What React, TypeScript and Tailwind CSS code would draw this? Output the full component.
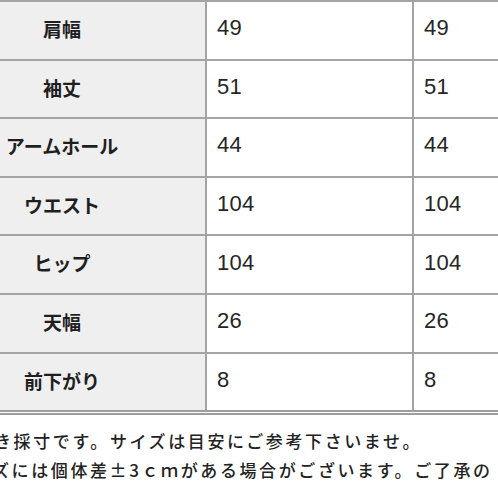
const rows = [
  { label: "肩幅", a: "49", b: "49" },
  { label: "袖丈", a: "51", b: "51" },
  { label: "アームホール", a: "44", b: "44" },
  { label: "ウエスト", a: "104", b: "104" },
  { label: "ヒップ", a: "104", b: "104" },
  { label: "天幅", a: "26", b: "26" },
  { label: "前下がり", a: "8", b: "8" },
];

const jp = { fontFamily: '"Noto Sans CJK JP", sans-serif' };
const num = { fontFamily: '"Liberation Sans", Arial, sans-serif' };

export default function App() {
  return (
    <div className="w-[498px] h-[498px] overflow-hidden bg-white">
      {/* size table */}
      <div className="border-b-[5px] border-double border-[#9e9e9e]">
        {rows.map((row) => (
          <div key={row.label} className="flex h-[58.6px] border-t-2 border-[#a4a4a4]">
            <div
              className="w-[207px] shrink-0 bg-[#efefef] border-r-2 border-[#a4a4a4] flex items-center justify-center pr-[81px] pb-[2px] text-[19px] font-bold text-[#1f1f1f] whitespace-nowrap"
              style={jp}
            >
              {row.label}
            </div>
            <div
              className="w-[207px] shrink-0 border-r-2 border-[#a4a4a4] flex items-center pl-[10px] pb-[5px] text-[22px] tracking-[0.3px] text-[#262626]"
              style={num}
            >
              {row.a}
            </div>
            <div
              className="flex-1 flex items-center pl-[10px] pb-[5px] text-[22px] tracking-[0.3px] text-[#262626]"
              style={num}
            >
              {row.b}
            </div>
          </div>
        ))}
      </div>

      {/* notes */}
      <div
        className="pt-[11px] text-[17px] font-medium leading-[29px] tracking-[2.6px] text-[#222222] whitespace-nowrap"
        style={jp}
      >
        <p className="-ml-[6px]">き採寸です。サイズは目安にご参考下さいませ。</p>
        <p className="-ml-[8px]">ズには個体差±3ｃｍがある場合がございます。ご了承の</p>
      </div>
    </div>
  );
}
